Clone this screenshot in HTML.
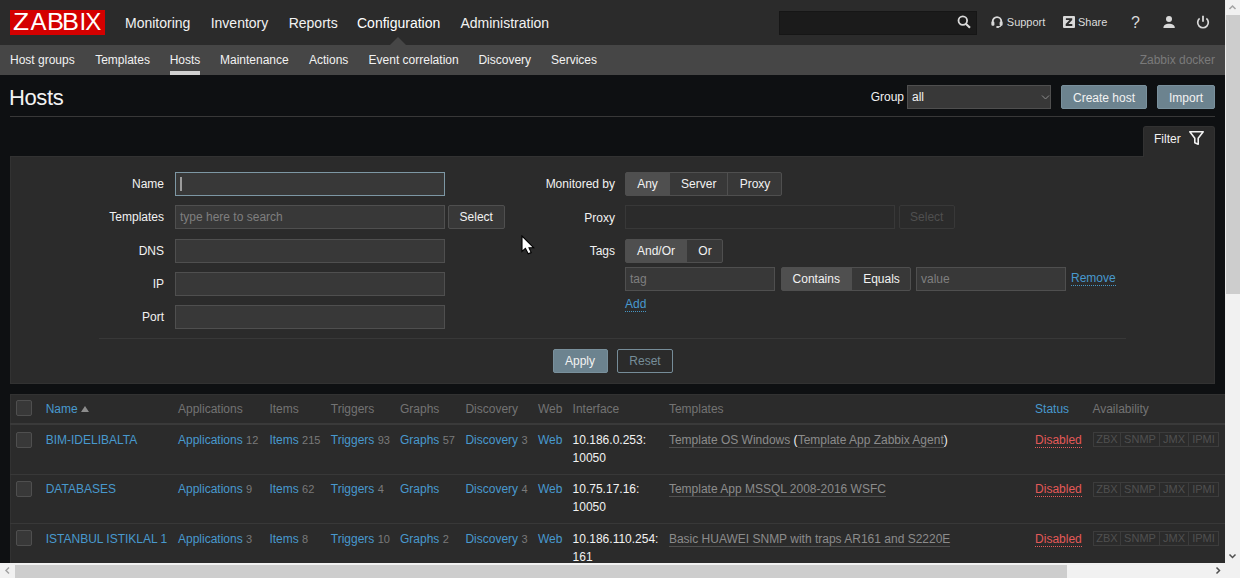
<!DOCTYPE html>
<html><head><meta charset="utf-8">
<style>
*{box-sizing:border-box;margin:0;padding:0}
html,body{width:1240px;height:578px;overflow:hidden;background:#0e1012;font-family:"Liberation Sans",sans-serif;font-size:12px;color:#f2f2f2}
.a{position:absolute;white-space:nowrap}
.t{position:absolute;white-space:nowrap;line-height:14px}
#hdr{position:absolute;left:0;top:0;width:1225px;height:45px;background:#2b2b2b}
#sub{position:absolute;left:0;top:45px;width:1225px;height:30px;background:#464646}
.nav{font-size:14px;color:#f2f2f2}
.snav{color:#f2f2f2}
.inp{position:absolute;background:#383838;border:1px solid #4f4f4f;border-radius:0}
.btn{position:absolute;background:#6c838f;border:1px solid #79909c;border-radius:2px;color:#f2f2f2;text-align:center}
.lnk{color:#4899ce}
.gr{color:#7a7a7a;font-size:11px}
.th{color:#737373}
.ph{color:#7f7f7f}
.dot{border-bottom:1px dotted #4796c4;line-height:13px}
.bg{position:absolute;background:#383838;border:1px solid #4f4f4f;border-radius:2px}
.tri{display:inline-block;width:0;height:0;border-left:4px solid transparent;border-right:4px solid transparent;border-bottom:6px solid #8c8c8c;vertical-align:1px;margin-left:0}
.tl{color:#8c8c8c;border-bottom:1px solid #4f4f4f}
.wt{color:#f2f2f2}
.dis{color:#e45959;border-bottom:1px dotted #e45959}
.av{position:absolute;height:15px;border:1px solid #3c3c3c;display:flex;line-height:13px;color:#505050;font-size:11px}
.av span{display:block;text-align:center;border-right:1px solid #3c3c3c;height:13px}
.lg{top:8.3px;font-size:24px;line-height:28px;color:#fff}
.cb{position:absolute;width:16px;height:16px;background:#383838;border:1px solid #4f4f4f;border-radius:2px}
</style></head><body>
<!-- header -->
<div id="hdr"></div>
<div class="a" style="left:10px;top:10px;width:95px;height:25px;background:#d40000"></div>
<div class="t lg" style="left:12.5px;transform:scaleX(1.1);transform-origin:1px 0">Z</div><div class="t lg" style="left:30.4px">A</div><div class="t lg" style="left:47px;transform:scaleX(1.06);transform-origin:2px 0">B</div><div class="t lg" style="left:62.3px;transform:scaleX(1.06);transform-origin:2px 0">B</div><div class="t lg" style="left:79.6px">I</div><div class="t lg" style="left:85.3px">X</div>
<div class="t nav" style="left:125px;top:15.5px">Monitoring</div>
<div class="t nav" style="left:210.7px;top:15.5px">Inventory</div>
<div class="t nav" style="left:288.7px;top:15.5px">Reports</div>
<div class="t nav" style="left:357px;top:15.5px;color:#fff">Configuration</div>
<div class="t nav" style="left:460.4px;top:15.5px">Administration</div>
<div class="a" style="left:779px;top:10.8px;width:198px;height:24px;background:#1b1b1b;border:1px solid #161616"></div>


<!-- header icons -->
<svg class="a" style="left:955px;top:13px" width="18" height="18" viewBox="0 0 18 18"><circle cx="7.8" cy="7.6" r="4.3" fill="none" stroke="#d9d9d9" stroke-width="1.8"/><line x1="10.8" y1="10.7" x2="15" y2="14.7" stroke="#d9d9d9" stroke-width="2.2"/></svg>
<svg class="a" style="left:991px;top:15px" width="12" height="13" viewBox="0 0 12 13"><path d="M1.7 8.6 V6.4 A4.3 4.3 0 0 1 10.3 6.4 V8.6" fill="none" stroke="#dadada" stroke-width="1.9"/><rect x="0.4" y="6.6" width="3" height="4.2" rx="1.1" fill="#dadada"/><rect x="8.6" y="6.6" width="3" height="4.2" rx="1.1" fill="#dadada"/><path d="M10.2 10 Q9.6 12 7 12" fill="none" stroke="#dadada" stroke-width="1.2"/><ellipse cx="6.6" cy="12" rx="1.5" ry="1" fill="#dadada"/></svg>
<div class="t" style="left:1006.8px;top:15px;color:#dcdcdc;font-size:11px">Support</div>
<svg class="a" style="left:1063px;top:16px" width="12" height="12" viewBox="0 0 12 12"><rect x="0" y="0" width="12" height="12" rx="1" fill="#d9d9d9"/><path d="M2.9 2.2 H9.2 V4.1 L5.4 8.1 H9.3 V10 H2.7 V8.1 L6.5 4.1 H2.9 Z" fill="#2b2b2b"/></svg>
<div class="t" style="left:1078px;top:15px;color:#dcdcdc;font-size:11px">Share</div>
<div class="t" style="left:1131px;top:13.5px;font-size:16px;line-height:18px;color:#d9d9d9">?</div>
<svg class="a" style="left:1162px;top:15px" width="14" height="14" viewBox="0 0 14 14"><circle cx="7" cy="4" r="3" fill="#d9d9d9"/><path d="M1.4 12.6 C1.4 10.2 4 8.8 7 8.8 C10 8.8 12.8 10.2 12.8 12.6 Q12.8 13.1 12.2 13.1 H2 Q1.4 13.1 1.4 12.6 Z" fill="#d9d9d9"/></svg>
<svg class="a" style="left:1196px;top:15px" width="14" height="14" viewBox="0 0 14 14"><path d="M3.6 3.4 A5.3 5.3 0 1 0 10.4 3.4" fill="none" stroke="#d9d9d9" stroke-width="1.7"/><line x1="7" y1="0.8" x2="7" y2="6.8" stroke="#d9d9d9" stroke-width="1.8"/></svg>


<!-- subnav -->
<div id="sub"></div>
<div class="a" style="left:390px;top:37px;width:0;height:0;border-left:8px solid transparent;border-right:8px solid transparent;border-bottom:8px solid #464646"></div>
<div class="t snav" style="left:10px;top:53px">Host groups</div>
<div class="t snav" style="left:95.2px;top:53px">Templates</div>
<div class="t snav" style="left:169.7px;top:53px">Hosts</div>
<div class="a" style="left:169.5px;top:71px;width:30.5px;height:4px;background:#d0d0d0"></div>
<div class="t snav" style="left:220px;top:53px">Maintenance</div>
<div class="t snav" style="left:309px;top:53px">Actions</div>
<div class="t snav" style="left:368.6px;top:53px">Event correlation</div>
<div class="t snav" style="left:478.4px;top:53px">Discovery</div>
<div class="t snav" style="left:551px;top:53px">Services</div>
<div class="t" style="right:25px;top:53px;color:#7a7a7a">Zabbix docker</div>

<!-- page title -->
<div class="t" style="left:9px;top:85.5px;font-size:22px;line-height:24px;letter-spacing:-0.4px">Hosts</div>
<div class="t" style="left:870.7px;top:90px">Group</div>
<div class="inp" style="left:907px;top:85px;width:144px;height:24px"></div>
<div class="t" style="left:912px;top:90px">all</div>
<svg class="a" style="left:1041px;top:94px" width="9" height="7" viewBox="0 0 9 7"><path d="M1 1.5 L4.5 5 L8 1.5" fill="none" stroke="#8c8c8c" stroke-width="1"/></svg>
<div class="btn" style="left:1061px;top:85px;width:86px;height:24px"></div>
<div class="t" style="left:1061px;top:90.7px;width:86px;text-align:center">Create host</div>
<div class="btn" style="left:1157px;top:85px;width:58px;height:24px"></div>
<div class="t" style="left:1157px;top:90.7px;width:58px;text-align:center">Import</div>
<div class="a" style="left:10px;top:116px;width:1205px;height:1px;background:#383838"></div>

<!-- filter -->
<div class="a" style="left:10px;top:156px;width:1205px;height:228px;background:#2b2b2b;border:1px solid #323232"></div>
<div class="a" style="left:1143px;top:126px;width:72px;height:31px;background:#2b2b2b;border:1px solid #323232;border-bottom:0;border-radius:3px 3px 0 0"></div>
<div class="t" style="left:1154px;top:132px">Filter</div>
<!-- funnel -->
<svg class="a" style="left:1188px;top:130px" width="17" height="16" viewBox="0 0 17 16"><path d="M1.8 1.8 H15.2 L10.2 8.2 V14.2 L6.8 12.8 V8.2 Z" fill="none" stroke="#f2f2f2" stroke-width="1.6" stroke-linejoin="round"/></svg>


<!-- filter form -->
<div class="t" style="right:1076px;top:177px">Name</div>
<div class="inp" style="left:174.7px;top:172px;width:270.3px;height:24px;border-color:#7d97a4"></div>
<div class="a" style="left:180px;top:177px;width:2px;height:14px;background:#9c9c9c"></div>
<div class="t" style="right:1076px;top:210.3px">Templates</div>
<div class="inp" style="left:175px;top:205.3px;width:270px;height:24px"></div>
<div class="t ph" style="left:180px;top:210.3px">type here to search</div>
<div class="bg" style="left:447.5px;top:205.3px;width:57.5px;height:24px"></div>
<div class="t" style="left:447.5px;top:210.3px;width:57.5px;text-align:center">Select</div>
<div class="t" style="right:1076px;top:243.6px">DNS</div>
<div class="inp" style="left:175px;top:238.6px;width:270px;height:24px"></div>
<div class="t" style="right:1076px;top:277px">IP</div>
<div class="inp" style="left:175px;top:272px;width:270px;height:24px"></div>
<div class="t" style="right:1076px;top:310.4px">Port</div>
<div class="inp" style="left:175px;top:305.4px;width:270px;height:24px"></div>

<div class="t" style="right:625px;top:177px">Monitored by</div>
<div class="a" style="left:625px;top:172px;width:157px;height:24px;background:#383838;border:1px solid #4f4f4f;border-radius:2px"></div>
<div class="a" style="left:626px;top:173px;width:44px;height:22px;background:#4f4f4f"></div>
<div class="a" style="left:727px;top:173px;width:1px;height:22px;background:#4f4f4f"></div>
<div class="t" style="left:625px;top:177px;width:45px;text-align:center">Any</div>
<div class="t" style="left:670px;top:177px;width:57.5px;text-align:center">Server</div>
<div class="t" style="left:728px;top:177px;width:54px;text-align:center">Proxy</div>

<div class="t" style="right:625px;top:211px">Proxy</div>
<div class="a" style="left:625px;top:205.3px;width:270px;height:24px;border:1px solid #383838"></div>
<div class="a" style="left:898.5px;top:205.3px;width:56.5px;height:24px;border:1px solid #383838;border-radius:2px"></div>
<div class="t" style="left:898.5px;top:210.3px;width:56.5px;text-align:center;color:#4f4f4f">Select</div>

<div class="t" style="right:625px;top:244px">Tags</div>
<div class="a" style="left:625px;top:238.6px;width:98px;height:24px;background:#383838;border:1px solid #4f4f4f;border-radius:2px"></div>
<div class="a" style="left:626px;top:239.6px;width:61px;height:22px;background:#4f4f4f"></div>
<div class="t" style="left:625px;top:243.6px;width:62px;text-align:center">And/Or</div>
<div class="t" style="left:687px;top:243.6px;width:36px;text-align:center">Or</div>

<div class="inp" style="left:625px;top:267px;width:150px;height:24px"></div>
<div class="t ph" style="left:630px;top:272px">tag</div>
<div class="a" style="left:780.5px;top:267px;width:130.5px;height:24px;background:#383838;border:1px solid #4f4f4f;border-radius:2px"></div>
<div class="a" style="left:781.5px;top:268px;width:70.5px;height:22px;background:#4f4f4f"></div>
<div class="t" style="left:780.5px;top:272px;width:71.5px;text-align:center">Contains</div>
<div class="t" style="left:852px;top:272px;width:59px;text-align:center">Equals</div>
<div class="inp" style="left:916px;top:267px;width:150px;height:24px"></div>
<div class="t ph" style="left:921px;top:272px">value</div>
<div class="t lnk dot" style="left:1071px;top:272px">Remove</div>
<div class="t lnk dot" style="left:625px;top:298px">Add</div>

<div class="a" style="left:99px;top:338px;width:1027px;height:1px;background:#383838"></div>
<div class="btn" style="left:552.5px;top:349px;width:55px;height:24px"></div>
<div class="t" style="left:552.5px;top:354px;width:55px;text-align:center">Apply</div>
<div class="a" style="left:617px;top:349px;width:56px;height:24px;border:1.5px solid #768d99;border-radius:2px"></div>
<div class="t" style="left:617px;top:354px;width:56px;text-align:center;color:#768d99">Reset</div>

<!-- table -->
<div class="a" style="left:10px;top:394px;width:1215px;height:169px;background:#2b2b2b;border-top:1px solid #323232;border-left:1px solid #323232"></div>
<div class="cb" style="left:16px;top:400px"></div>
<div class="t lnk" style="left:45.7px;top:402.0px;">Name <span class="tri"></span></div>
<div class="t th" style="left:178px;top:402.0px;">Applications</div>
<div class="t th" style="left:269.4px;top:402.0px;">Items</div>
<div class="t th" style="left:330.8px;top:402.0px;">Triggers</div>
<div class="t th" style="left:400px;top:402.0px;">Graphs</div>
<div class="t th" style="left:465.4px;top:402.0px;">Discovery</div>
<div class="t th" style="left:538px;top:402.0px;">Web</div>
<div class="t th" style="left:572.6px;top:402.0px;">Interface</div>
<div class="t th" style="left:668.9px;top:402.0px;">Templates</div>
<div class="t th" style="left:1092.4px;top:402.0px;">Availability</div>
<div class="t lnk" style="left:1035.1px;top:402.0px;">Status</div>
<div class="a" style="left:10px;top:423px;width:1215px;height:2px;background:#3a3a3a"></div>
<div class="cb" style="left:16px;top:431.5px"></div>
<div class="t lnk" style="left:45.7px;top:432.8px;">BIM-IDELIBALTA</div>
<div class="t lnk" style="left:178px;top:432.8px;">Applications <span class="gr">12</span></div>
<div class="t lnk" style="left:269.4px;top:432.8px;">Items <span class="gr">215</span></div>
<div class="t lnk" style="left:330.8px;top:432.8px;">Triggers <span class="gr">93</span></div>
<div class="t lnk" style="left:400px;top:432.8px;">Graphs <span class="gr">57</span></div>
<div class="t lnk" style="left:465.4px;top:432.8px;">Discovery <span class="gr">3</span></div>
<div class="t lnk" style="left:538px;top:432.8px;">Web</div>
<div class="t wt" style="left:572.6px;top:432.8px;">10.186.0.253:</div>
<div class="t wt" style="left:572.6px;top:450.8px;">10050</div>
<div class="t " style="left:668.9px;top:432.8px;"><span class="tl">Template OS Windows</span> (<span class="tl">Template App Zabbix Agent</span>)</div>
<div class="t " style="left:1035.1px;top:432.8px;"><span class="dis">Disabled</span></div>
<div class="av" style="left:1093px;top:432.3px"><span style="width:27px">ZBX</span><span style="width:39px">SNMP</span><span style="width:29px">JMX</span><span style="width:29px;border-right:0">IPMI</span></div>
<div class="a" style="left:10px;top:473.8px;width:1215px;height:1px;background:#383838"></div>
<div class="cb" style="left:16px;top:480.8px"></div>
<div class="t lnk" style="left:45.7px;top:482.1px;">DATABASES</div>
<div class="t lnk" style="left:178px;top:482.1px;">Applications <span class="gr">9</span></div>
<div class="t lnk" style="left:269.4px;top:482.1px;">Items <span class="gr">62</span></div>
<div class="t lnk" style="left:330.8px;top:482.1px;">Triggers <span class="gr">4</span></div>
<div class="t lnk" style="left:400px;top:482.1px;">Graphs</div>
<div class="t lnk" style="left:465.4px;top:482.1px;">Discovery <span class="gr">4</span></div>
<div class="t lnk" style="left:538px;top:482.1px;">Web</div>
<div class="t wt" style="left:572.6px;top:482.1px;">10.75.17.16:</div>
<div class="t wt" style="left:572.6px;top:500.1px;">10050</div>
<div class="t " style="left:668.9px;top:482.1px;"><span class="tl">Template App MSSQL 2008-2016 WSFC</span></div>
<div class="t " style="left:1035.1px;top:482.1px;"><span class="dis">Disabled</span></div>
<div class="av" style="left:1093px;top:481.6px"><span style="width:27px">ZBX</span><span style="width:39px">SNMP</span><span style="width:29px">JMX</span><span style="width:29px;border-right:0">IPMI</span></div>
<div class="a" style="left:10px;top:523.3px;width:1215px;height:1px;background:#383838"></div>
<div class="cb" style="left:16px;top:530.3px"></div>
<div class="t lnk" style="left:45.7px;top:531.6px;">ISTANBUL ISTIKLAL 1</div>
<div class="t lnk" style="left:178px;top:531.6px;">Applications <span class="gr">3</span></div>
<div class="t lnk" style="left:269.4px;top:531.6px;">Items <span class="gr">8</span></div>
<div class="t lnk" style="left:330.8px;top:531.6px;">Triggers <span class="gr">10</span></div>
<div class="t lnk" style="left:400px;top:531.6px;">Graphs <span class="gr">2</span></div>
<div class="t lnk" style="left:465.4px;top:531.6px;">Discovery <span class="gr">3</span></div>
<div class="t lnk" style="left:538px;top:531.6px;">Web</div>
<div class="t wt" style="left:572.6px;top:531.6px;">10.186.110.254:</div>
<div class="t wt" style="left:572.6px;top:549.6px;">161</div>
<div class="t " style="left:668.9px;top:531.6px;"><span class="tl">Basic HUAWEI SNMP with traps AR161 and S2220E</span></div>
<div class="t " style="left:1035.1px;top:531.6px;"><span class="dis">Disabled</span></div>
<div class="av" style="left:1093px;top:531.0999999999999px"><span style="width:27px">ZBX</span><span style="width:39px">SNMP</span><span style="width:29px">JMX</span><span style="width:29px;border-right:0">IPMI</span></div>

<!-- scrollbars -->
<div class="a" style="left:1225px;top:0;width:15px;height:578px;background:#f1f1f1"></div>
<div class="a" style="left:1226px;top:15px;width:14px;height:279px;background:#cdcdcd"></div>
<div class="a" style="left:0;top:563px;width:1225px;height:15px;background:#f1f1f1"></div>
<div class="a" style="left:15px;top:565px;width:1051.5px;height:13px;background:#cdcdcd"></div>
<svg class="a" style="left:1225px;top:0" width="15" height="15" viewBox="0 0 15 15"><path d="M4.5 9 L7.5 6 L10.5 9" fill="none" stroke="#a3a3a3" stroke-width="1.5"/></svg>
<svg class="a" style="left:1225px;top:548px" width="15" height="15" viewBox="0 0 15 15"><path d="M4.5 6.5 L7.5 9.5 L10.5 6.5" fill="none" stroke="#505050" stroke-width="1.5"/></svg>
<svg class="a" style="left:0;top:563px" width="15" height="15" viewBox="0 0 15 15"><path d="M9 4.5 L6 7.5 L9 10.5" fill="none" stroke="#a3a3a3" stroke-width="1.5"/></svg>
<svg class="a" style="left:1210px;top:563px" width="15" height="15" viewBox="0 0 15 15"><path d="M6.5 4.5 L9.5 7.5 L6.5 10.5" fill="none" stroke="#505050" stroke-width="1.5"/></svg>
<!-- cursor -->
<svg class="a" style="left:521px;top:234.5px" width="15" height="21" viewBox="0 0 15 21"><path d="M1 1 V16.4 L4.4 13.3 L7.2 18.8 L10.2 17.6 L8 12.7 H12.6 Z" fill="#fff" stroke="#000" stroke-width="1.1" stroke-linejoin="miter"/></svg>
</body></html>
